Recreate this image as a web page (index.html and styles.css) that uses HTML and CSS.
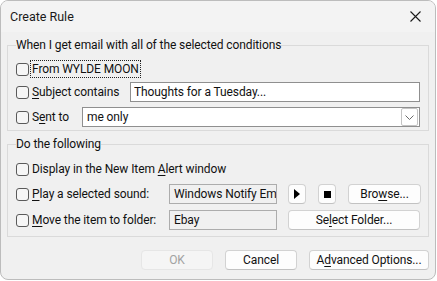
FILE: index.html
```html
<!DOCTYPE html>
<html lang="en">
<head>
    <meta charset="UTF-8">
    <title>Create Rule</title>
    <link rel="stylesheet" href="styles.css">
</head>
<body>

<div class="dialog">
    <!-- Title bar -->
    <div class="titlebar">
        <span class="title">Create Rule</span>
        <span class="close">
            <svg width="11" height="11" viewBox="0 0 11 11"><path d="M0.5 0.5 L10.5 10.5 M10.5 0.5 L0.5 10.5" stroke="#1a1a1a" stroke-width="1.1" fill="none"/></svg>
        </span>
    </div>

    <div class="content">
        <!-- Conditions -->
        <fieldset class="group conditions">
            <legend>When I get email with all of the selected conditions</legend>

            <div class="row row-from">
                <label class="check">
                    <input type="checkbox">
                    <span class="focus">From WYLDE MOON</span>
                </label>
            </div>

            <div class="row row-subject">
                <label class="check label-subject">
                    <input type="checkbox">
                    <span><u>S</u>ubject contains</span>
                </label>
                <input class="field" type="text" value="Thoughts for a Tuesday...">
            </div>

            <div class="row row-sent">
                <label class="check label-sent">
                    <input type="checkbox">
                    <span>S<u>e</u>nt to</span>
                </label>
                <div class="field select">
                    <span>me only</span>
                    <span class="drop">
                        <svg width="9" height="5" viewBox="0 0 9 5"><path d="M0.5 0.5 L4.5 4.5 L8.5 0.5" stroke="#6a6a6a" stroke-width="1" fill="none"/></svg>
                    </span>
                </div>
            </div>
        </fieldset>

        <!-- Actions -->
        <fieldset class="group actions">
            <legend>Do the following</legend>

            <div class="row row-alert">
                <label class="check">
                    <input type="checkbox">
                    <span>Display in the New Item <u>A</u>lert window</span>
                </label>
            </div>

            <div class="row row-sound">
                <label class="check label-action">
                    <input type="checkbox">
                    <span><u>P</u>lay a selected sound:</span>
                </label>
                <div class="field disabled">Windows Notify Email</div>
                <button class="btn icon-btn play">
                    <svg width="6" height="10" viewBox="0 0 6 10"><path d="M0 0 L6 5 L0 10 Z" fill="#000"/></svg>
                </button>
                <button class="btn icon-btn stop">
                    <svg width="7" height="7" viewBox="0 0 7 7"><rect width="7" height="7" fill="#000"/></svg>
                </button>
                <button class="btn browse">Bro<u>w</u>se...</button>
            </div>

            <div class="row row-folder">
                <label class="check label-action">
                    <input type="checkbox">
                    <span><u>M</u>ove the item to folder:</span>
                </label>
                <div class="field disabled">Ebay</div>
                <button class="btn select-folder">Se<u>l</u>ect Folder...</button>
            </div>
        </fieldset>
    </div>

    <!-- Dialog buttons -->
    <div class="footer">
        <button class="btn footer-btn" disabled>OK</button>
        <button class="btn footer-btn">Cancel</button>
        <button class="btn advanced">A<u>d</u>vanced Options...</button>
    </div>
</div>

</body>
</html>
```

FILE: styles.css
```css
body {
    margin: 0;
    background-color: #ffffff;
    font-family: 'Roboto', 'Segoe UI', sans-serif;
    font-size: 12px;
    letter-spacing: -0.1px;
    color: #111;
}

u {
    text-decoration-thickness: 1px;
    text-underline-offset: 2px;
}

.dialog {
    width: 436px;
    height: 280px;
    box-sizing: border-box;
    border: 1px solid #bcbcbc;
    border-radius: 8px;
    background-color: #f0f0f0;
    overflow: hidden;
    display: flex;
    flex-direction: column;
}

.titlebar {
    height: 31px;
    flex: none;
    background-color: #f3f3f3;
    display: flex;
    align-items: center;
    justify-content: space-between;
    padding: 0 14px 0 9px;
}

.title {
    font-size: 12.5px;
    letter-spacing: 0;
    color: #1a1a1a;
}

.close {
    display: flex;
}

.content {
    padding: 0 6px;
}

/* Group boxes */
.group {
    margin: 5px 0 0;
    border: 1px solid #dadada;
    min-width: 0;
}

.group legend {
    padding: 0;
    line-height: 16px;
}

.conditions {
    padding: 5px 8px 3px;
}

.actions {
    padding: 7px 8px 6px;
}

.row {
    display: flex;
    align-items: center;
    height: 20px;
}

.row-from {
    height: 22px;
}

.row-subject {
    margin-top: 2px;
}

.row-sent {
    margin-top: 5px;
}

.row-sound {
    margin-top: 5px;
}

.row-folder {
    margin-top: 6px;
}

/* Checkboxes */
.check {
    display: flex;
    align-items: center;
    flex: none;
    white-space: nowrap;
}

.check input {
    appearance: none;
    width: 13px;
    height: 13px;
    margin: 0 3px 0 0;
    box-sizing: border-box;
    border: 1px solid #5a5a5a;
    border-radius: 3px;
    background-color: #f6f6f6;
}

.focus {
    outline: 1px dotted #222;
    outline-offset: 0;
    padding: 0 1px;
    margin-left: -1px;
    line-height: 16px;
}

.label-subject {
    width: 114px;
}

.label-sent {
    width: 66px;
}

.label-action {
    width: 153px;
}

/* Text fields */
.field {
    height: 20px;
    box-sizing: border-box;
    border: 1px solid #8f8f8f;
    background-color: #ffffff;
    font-family: inherit;
    font-size: 12px;
    letter-spacing: inherit;
    color: #111;
    padding: 0 3px;
    margin: 0;
    display: flex;
    align-items: center;
    white-space: nowrap;
    overflow: hidden;
}

input.field {
    flex: 1;
    min-width: 0;
    outline: none;
}

.select {
    flex: 1;
    justify-content: space-between;
    padding: 0 1px 0 4px;
}

.drop {
    width: 17px;
    height: 18px;
    box-sizing: border-box;
    border: 1px solid #c4c4c4;
    border-radius: 2px;
    display: flex;
    align-items: center;
    justify-content: center;
}

.disabled {
    width: 108px;
    flex: none;
    background-color: #f0f0f0;
    border-color: #acacac;
    padding: 0 4px;
}

/* Buttons */
.btn {
    height: 20px;
    box-sizing: border-box;
    border: 1px solid #d2d2d2;
    border-bottom-color: #c2c2c2;
    border-radius: 4px;
    background-color: #fdfdfd;
    font-family: inherit;
    font-size: 12px;
    letter-spacing: inherit;
    color: #111;
    padding: 0;
    margin: 0;
    display: flex;
    align-items: center;
    justify-content: center;
    flex: none;
}

.icon-btn {
    width: 18px;
    margin-left: 11px;
}

.stop {
    margin-left: 12px;
}

.browse {
    width: 73px;
    margin-left: 12px;
}

.select-folder {
    width: 132px;
    margin-left: 11px;
}

.footer {
    display: flex;
    justify-content: flex-end;
    gap: 12px;
    padding: 13px 6px 0 0;
}

.footer-btn {
    width: 72px;
}

.footer-btn:disabled {
    background-color: #f5f5f5;
    border-color: #e6e6e6;
    color: #a2a2a2;
}

.advanced {
    width: 120px;
}
```
